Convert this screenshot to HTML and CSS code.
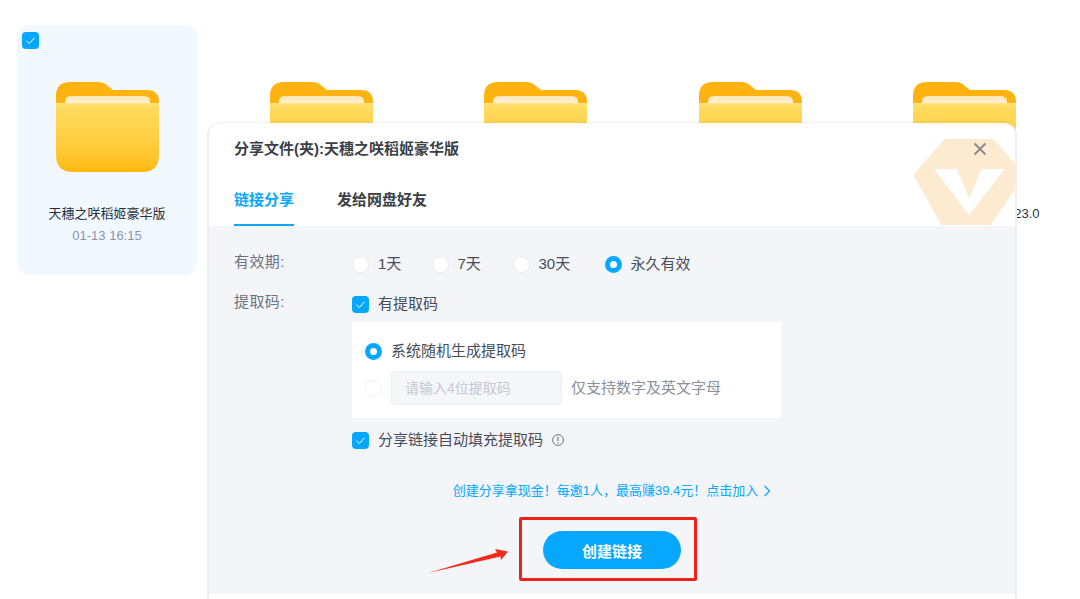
FILE: index.html
```html
<!DOCTYPE html>
<html lang="zh-CN">
<head>
    <meta charset="UTF-8">
    <title>分享文件</title>
    <link rel="stylesheet" href="styles.css">
</head>
<body>

    <svg class="defs" width="0" height="0">
        <defs>
            <linearGradient id="folderFront" x1="0" y1="0" x2="0" y2="1">
                <stop offset="0" stop-color="#ffe68c"/>
                <stop offset="0.05" stop-color="#ffdb5f"/>
                <stop offset="0.6" stop-color="#ffcc3d"/>
                <stop offset="0.9" stop-color="#ffbf1f"/>
                <stop offset="1" stop-color="#ffb50a"/>
            </linearGradient>
            <linearGradient id="folderPaper" x1="0" y1="0" x2="0" y2="1">
                <stop offset="0" stop-color="#ffe6b4"/>
                <stop offset="1" stop-color="#fff0d2"/>
            </linearGradient>
            <linearGradient id="badgeFill" x1="0" y1="0" x2="0" y2="1">
                <stop offset="0" stop-color="#fdf0db"/>
                <stop offset="1" stop-color="#fbe5c6"/>
            </linearGradient>
            <symbol id="folder" viewBox="0 0 103 90">
                <path fill="#ffb310" d="M0 24V14Q0 0 14 0H42Q48 0 52 4L57 8H91Q103 8 103 20V24Z"/>
                <path fill="url(#folderPaper)" d="M9 21V20Q9 14 15 14H88Q94 14 94 20V21Z"/>
                <path fill="url(#folderFront)" d="M0 21H103V73Q103 90 86 90H17Q0 90 0 73Z"/>
            </symbol>
            <symbol id="tick" viewBox="0 0 17 17">
                <path fill="none" stroke="#fff" stroke-width="1" d="M4.5 8.8L7.4 11.5L12.5 5.8"/>
            </symbol>
        </defs>
    </svg>

    <!-- file grid behind the dialog -->
    <div class="file-grid">
        <div class="file-item selected">
            <span class="check corner"><svg><use href="#tick"/></svg></span>
            <svg class="folder"><use href="#folder"/></svg>
            <div class="file-name">天穗之咲稻姬豪华版</div>
            <div class="file-time">01-13 16:15</div>
        </div>
        <div class="file-item"><svg class="folder"><use href="#folder"/></svg></div>
        <div class="file-item"><svg class="folder"><use href="#folder"/></svg></div>
        <div class="file-item"><svg class="folder"><use href="#folder"/></svg></div>
        <div class="file-item">
            <svg class="folder"><use href="#folder"/></svg>
            <div class="file-name tail">23.0</div>
        </div>
    </div>

    <!-- share dialog -->
    <div class="dialog">
        <div class="dialog-head">
            <svg class="badge" viewBox="0 0 112 86">
                <path fill="#fcebd0" stroke="#fcebd0" stroke-width="6" stroke-linejoin="round" d="M33 3H79L108 36L70 92H35L4 36Z"/>
                <path fill="#fff" d="M21 30H44L56 59L69 30H92L56 76Z"/>
            </svg>
            <svg class="close" viewBox="0 0 14 14">
                <path fill="none" stroke="#8c8c8c" stroke-width="1.9" d="M1.5 1.5L12.500 12.500M12.500 1.5L1.5 12.500"/>
            </svg>
            <div class="dialog-title">分享文件(夹):天穗之咲稻姬豪华版</div>
            <div class="tabs">
                <div class="tab active">链接分享</div>
                <div class="tab">发给网盘好友</div>
            </div>
        </div>

        <div class="dialog-body">
            <div class="form-row">
                <div class="form-label">有效期:</div>
                <div class="options">
                    <label class="option"><span class="radio"></span>1天</label>
                    <label class="option"><span class="radio"></span>7天</label>
                    <label class="option"><span class="radio"></span>30天</label>
                    <label class="option"><span class="radio on"></span>永久有效</label>
                </div>
            </div>

            <div class="form-row code-row">
                <div class="form-label">提取码:</div>
                <div>
                    <label class="option"><span class="check"><svg><use href="#tick"/></svg></span>有提取码</label>
                    <div class="code-panel">
                        <label class="option"><span class="radio on"></span>系统随机生成提取码</label>
                        <div class="option custom-code">
                            <span class="radio faint"></span>
                            <div class="code-input">请输入4位提取码</div>
                            <span class="hint">仅支持数字及英文字母</span>
                        </div>
                    </div>
                    <label class="option autofill">
                        <span class="check"><svg><use href="#tick"/></svg></span>分享链接自动填充提取码
                        <svg class="info" viewBox="0 0 12 12">
                            <circle cx="6" cy="6" r="5.4" fill="none" stroke="#6f7580" stroke-width="1"/>
                            <path fill="none" stroke="#6f7580" stroke-width="1.2" d="M6 2.8V7M6 8.2V9.4"/>
                        </svg>
                    </label>
                </div>
            </div>

            <div class="promo">
                创建分享拿现金！每邀1人，最高赚39.4元！点击加入
                <svg class="chevron" viewBox="0 0 8 12">
                    <path fill="none" stroke="#06a7ff" stroke-width="1.2" d="M1.5 1L6.5 6L1.5 11"/>
                </svg>
            </div>
            <button class="create-btn">创建链接</button>
        </div>
    </div>

    <!-- red annotation over the screenshot -->
    <div class="mark-box"></div>
    <svg class="mark-arrow" viewBox="0 0 90 30">
        <path fill="#f5291e" d="M0 26L69 5.500L67 2L80 4.500L73 13L72.500 9.500Z"/>
    </svg>

</body>
</html>
```

FILE: styles.css
```css
* { box-sizing: border-box; }

body {
    margin: 0;
    height: 599px;
    overflow: hidden;
    position: relative;
    background: #fff;
    font-family: "Liberation Sans", "Noto Sans CJK SC", sans-serif;
    font-size: 15px;
    line-height: 20px;
    color: #454d5a;
}

.defs { position: absolute; }

/* file grid */
.file-grid {
    display: flex;
    gap: 34.4px;
    padding: 25px 0 0 17px;
}

.file-item {
    position: relative;
    flex: none;
    width: 180px;
    height: 250px;
    padding-top: 57px;
    border-radius: 12px;
    display: flex;
    flex-direction: column;
    align-items: center;
}

.file-item.selected { background: #f1f8ff; }

.folder {
    display: block;
    flex: none;
    width: 103px;
    height: 90px;
}

.file-name {
    margin-top: 32px;
    font-size: 13px;
    color: #2b303b;
}

.file-name.tail {
    align-self: flex-end;
    padding-right: 15px;
}

.file-time {
    margin-top: 2px;
    font-size: 13px;
    color: #8b94a8;
}

/* dialog */
.dialog {
    position: absolute;
    left: 209px;
    top: 123px;
    width: 806px;
    height: 490px;
    background: #fff;
    border-radius: 12px 12px 0 0;
    box-shadow: -2px 0 0 #eeeeef, 2px 0 0 #eeeeef, 0 -1px 2px rgba(0, 0, 0, 0.06);
}

.dialog-head {
    position: relative;
    height: 103px;
    padding: 16px 25px 0;
    overflow: hidden;
    border-radius: 12px 12px 0 0;
}

.badge {
    position: absolute;
    left: 704px;
    top: 16px;
    width: 112px;
    height: 86px;
    overflow: hidden;
}

.close {
    position: absolute;
    left: 764px;
    top: 19px;
    width: 14px;
    height: 14px;
}

.dialog-title {
    position: relative;
    font-weight: bold;
    color: #3b3f47;
}

.tabs {
    display: flex;
    gap: 43px;
    margin-top: 31px;
}

.tab {
    padding-bottom: 14px;
    border-bottom: 2px solid transparent;
    font-weight: bold;
    color: #3b3f47;
}

.tab.active {
    color: #06a7ff;
    border-bottom-color: #06a7ff;
}

.dialog-body {
    height: 368px;
    padding: 28px 25px 0;
    background: #f4f5f9;
    display: flex;
    flex-direction: column;
}

.form-row {
    display: grid;
    grid-template-columns: 118px 1fr;
}

.code-row { margin-top: 20px; }

.form-label {
    line-height: 16px;
    letter-spacing: 0.4px;
    color: #6b7280;
}

.options {
    display: grid;
    grid-template-columns: 79.5px 81px 92px auto;
}

.option {
    display: flex;
    align-items: center;
    gap: 9px;
}

.radio {
    flex: none;
    width: 17px;
    height: 17px;
    border-radius: 50%;
    background: #fff;
    border: 1px solid #e9ebf0;
}

.radio.on {
    border: 5.5px solid #06a7ff;
}

.radio.faint { border-color: #eef0f4; }

.check {
    flex: none;
    width: 17px;
    height: 17px;
    border-radius: 4px;
    background: #06a7ff;
}

.check svg {
    display: block;
    width: 17px;
    height: 17px;
}

.check.corner {
    position: absolute;
    left: 5px;
    top: 7px;
}

.code-panel {
    width: 429px;
    height: 96px;
    margin-top: 8px;
    padding: 19px 13px 0;
    background: #fff;
}

.custom-code { margin-top: 10px; }

.code-input {
    width: 171px;
    height: 34px;
    padding: 0 13px;
    line-height: 32px;
    font-size: 14px;
    color: #c4c8d2;
    background: #f5f6fa;
    border: 1px solid #eceef3;
    border-radius: 4px;
}

.hint { color: #8b909c; }

.autofill { margin-top: 12px; }

.info {
    width: 12px;
    height: 12px;
}

.promo {
    display: flex;
    align-items: center;
    justify-content: center;
    gap: 5px;
    margin-top: 31px;
    font-size: 13px;
    color: #06a7ff;
}

.chevron {
    width: 8px;
    height: 12px;
}

.create-btn {
    align-self: center;
    width: 138px;
    height: 38px;
    margin-top: 30px;
    padding: 0;
    border: none;
    border-radius: 19px;
    background: #06a7ff;
    color: #fff;
    font: bold 15px "Liberation Sans", "Noto Sans CJK SC", sans-serif;
}

/* annotation */
.mark-box {
    position: absolute;
    left: 519px;
    top: 517px;
    width: 178px;
    height: 64px;
    border: 3px solid #f0201c;
    border-radius: 2px;
}

.mark-arrow {
    position: absolute;
    left: 428px;
    top: 547px;
    width: 90px;
    height: 30px;
}
```
